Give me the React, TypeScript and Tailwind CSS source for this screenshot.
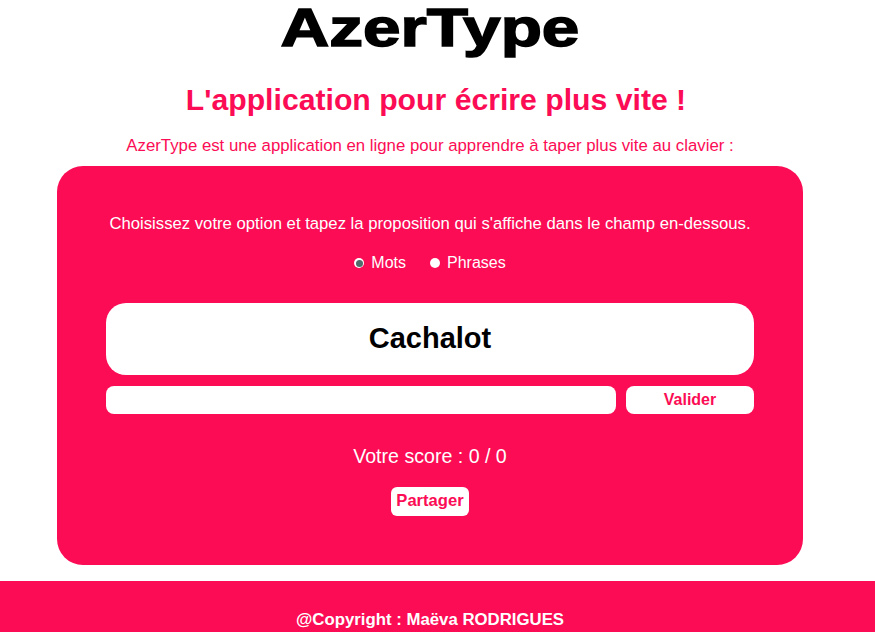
import React from 'react';

const font = "font-['Liberation_Sans',Arial,sans-serif]";

export default function App() {
  const [mode, setMode] = React.useState<'mots' | 'phrases'>('mots');
  const [saisie, setSaisie] = React.useState('');

  return (
    <div className={`${font} bg-white min-h-screen`}>
      {/* Main column */}
      <div className="w-[860px] text-center">
        <h1 className="pt-[2px] text-[54px] leading-[50px] font-bold text-black scale-x-[1.25] [-webkit-text-stroke:1.5px_black]">
          AzerType
        </h1>
        <h2 className="mt-[28px] pl-[12px] text-[30.2px] leading-[40px] font-bold text-[#fb0c55]">
          L'application pour écrire plus vite !
        </h2>
        <p className="mt-[16px] text-[16.8px] leading-[20px] text-[#fb0c55]">
          AzerType est une application en ligne pour apprendre à taper plus vite au clavier :
        </p>

        {/* Game zone */}
        <section className="mx-auto mt-[10px] w-[746px] rounded-[26px] bg-[#fb0c55] px-[49px] pt-[48px] pb-[49px] text-white">
          <p className="text-[16.7px] leading-[20px]">
            Choisissez votre option et tapez la proposition qui s'affiche dans le champ en-dessous.
          </p>

          <div className="mt-[19px] flex h-[20px] items-center justify-center gap-[24px] text-[16px]">
            <label className="flex items-center gap-[7px] cursor-pointer" onClick={() => setMode('mots')}>
              <span className="flex h-[10px] w-[10px] items-center justify-center rounded-full bg-white">
                {mode === 'mots' && <span className="h-[7px] w-[7px] rounded-full bg-[#4f6b6b]" />}
              </span>
              Mots
            </label>
            <label className="flex items-center gap-[7px] cursor-pointer" onClick={() => setMode('phrases')}>
              <span className="flex h-[10px] w-[10px] items-center justify-center rounded-full bg-white">
                {mode === 'phrases' && <span className="h-[7px] w-[7px] rounded-full bg-[#4f6b6b]" />}
              </span>
              Phrases
            </label>
          </div>

          <div className="mt-[30px] flex h-[72px] items-center justify-center rounded-[20px] bg-white text-[29px] font-bold text-black">
            Cachalot
          </div>

          <div className="mt-[11px] flex h-[28px] gap-[10px]">
            <input
              type="text"
              value={saisie}
              onChange={(e) => setSaisie(e.target.value)}
              className="flex-1 rounded-[8px] bg-white px-2 text-black outline-none"
            />
            <button className="w-[128px] rounded-[8px] bg-white text-[16px] font-bold text-[#fb0c55]">
              Valider
            </button>
          </div>

          <p className="mt-[30px] text-[19.6px] leading-[24px]">Votre score : 0 / 0</p>

          <button className="mt-[19px] h-[29px] rounded-[6px] bg-white px-[5px] text-[16.6px] font-bold text-[#fb0c55]">
            Partager
          </button>
        </section>
      </div>

      {/* Footer */}
      <footer className="mt-[16px] bg-[#fb0c55] pt-[29px] pb-[29px]">
        <p className="w-[860px] text-center text-[16.8px] leading-[20px] font-bold text-white">
          @Copyright : Maëva RODRIGUES
        </p>
      </footer>
    </div>
  );
}
